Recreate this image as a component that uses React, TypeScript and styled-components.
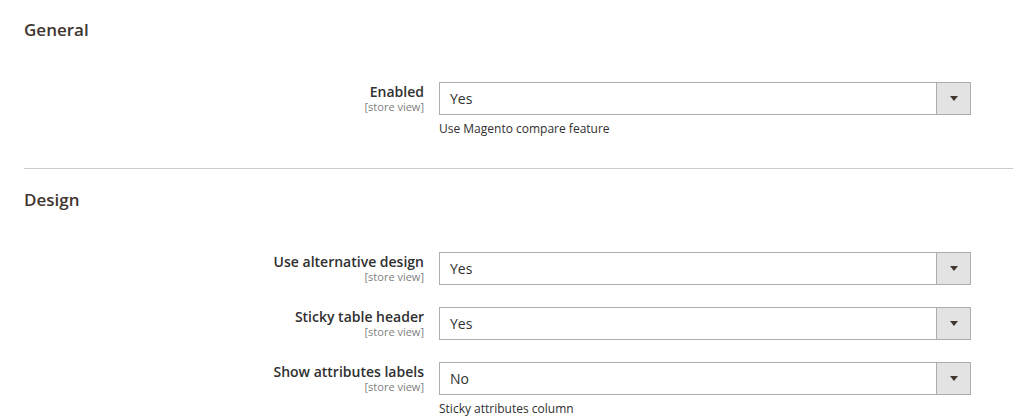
import styled, { createGlobalStyle } from "styled-components";

const GlobalStyle = createGlobalStyle`
    html, body {
        margin: 0;
        padding: 0;
        background: #ffffff;
    }
    body {
        font-family: "Open Sans", "Liberation Sans", sans-serif;
        color: #303030;
    }
`;

const Page = styled.div`
    padding: 0 0 0 24px;
`;

const Section = styled.section<{ $last?: boolean }>`
    border-bottom: ${(props) => (props.$last ? "none" : "1px solid #cccccc")};
    padding-bottom: ${(props) => (props.$last ? "0" : "32px")};
`;

const Heading = styled.h2<{ $first?: boolean }>`
    margin: ${(props) => (props.$first ? "20px" : "21px")} 0 0;
    font-size: 17px;
    line-height: 20px;
    font-weight: 600;
    color: #41362f;
`;

const Fieldset = styled.div`
    display: flex;
    flex-direction: column;
    gap: 22px;
    padding-top: 42px;
`;

const Row = styled.div`
    display: grid;
    grid-template-columns: 400px 532px;
    column-gap: 15px;
`;

const Label = styled.div`
    text-align: right;
    padding-top: 1px;
`;

const LabelText = styled.div`
    font-size: 14px;
    line-height: 17px;
    font-weight: 600;
    color: #303030;
`;

const Scope = styled.div`
    font-size: 11px;
    line-height: 13px;
    color: #808080;
`;

const Control = styled.div``;

const Select = styled.div`
    display: flex;
    height: 33px;
    box-sizing: border-box;
    border: 1px solid #adadad;
    background: #ffffff;
`;

const Value = styled.div`
    flex: 1;
    padding-left: 10px;
    font-size: 14px;
    line-height: 31px;
    color: #303030;
`;

const Button = styled.div`
    width: 33px;
    border-left: 1px solid #adadad;
    background: #e3e3e3;
    display: flex;
    align-items: center;
    justify-content: center;
`;

const Arrow = styled.span`
    width: 0;
    height: 0;
    border-left: 4px solid transparent;
    border-right: 4px solid transparent;
    border-top: 5px solid #41362f;
`;

const Note = styled.div`
    margin-top: 6px;
    font-size: 12px;
    line-height: 15px;
    color: #303030;
`;

interface IField {
    label: string;
    value: string;
    note?: string;
}

const general: IField[] = [
    { label: "Enabled", value: "Yes", note: "Use Magento compare feature" },
];

const design: IField[] = [
    { label: "Use alternative design", value: "Yes" },
    { label: "Sticky table header", value: "Yes" },
    { label: "Show attributes labels", value: "No", note: "Sticky attributes column" },
];

function Field({ field }: { field: IField }) {
    return (
        <Row>
            <Label>
                <LabelText>{field.label}</LabelText>
                <Scope>[store view]</Scope>
            </Label>
            <Control>
                <Select>
                    <Value>{field.value}</Value>
                    <Button>
                        <Arrow />
                    </Button>
                </Select>
                {field.note && <Note>{field.note}</Note>}
            </Control>
        </Row>
    );
}

function App() {
    return (
        <>
            <GlobalStyle />
            <Page>
                <Section>
                    <Heading $first>General</Heading>
                    <Fieldset>
                        {general.map((f) => (
                            <Field key={f.label} field={f} />
                        ))}
                    </Fieldset>
                </Section>
                <Section $last>
                    <Heading>Design</Heading>
                    <Fieldset>
                        {design.map((f) => (
                            <Field key={f.label} field={f} />
                        ))}
                    </Fieldset>
                </Section>
            </Page>
        </>
    );
}

export default App;
